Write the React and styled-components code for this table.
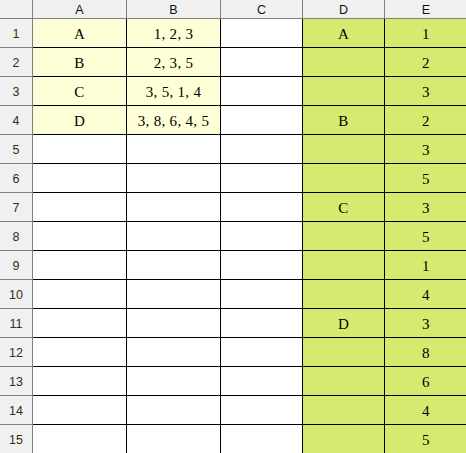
import React from "react";
import styled, { createGlobalStyle } from "styled-components";

const Global = createGlobalStyle`
  html, body { margin: 0; padding: 0; background: #ffffff; overflow: hidden; }
  body { width: 466px; height: 453px; }
`;

const Sheet = styled.div`
  display: grid;
  grid-template-columns: 33px 94px 94px 82px 82px 82px;
  grid-template-rows: 19px repeat(15, 29px);
  width: 466px;
  height: 453px;
  overflow: hidden;
`;

const HeadBase = styled.div`
  box-sizing: border-box;
  background: #f0f0f0;
  border-right: 1px solid #7f7f7f;
  border-bottom: 1px solid #7f7f7f;
  display: flex;
  align-items: center;
  justify-content: center;
  font-family: "Liberation Sans", Arial, sans-serif;
  font-size: 12.5px;
`;

const Corner = styled(HeadBase)``;

const ColHeader = styled(HeadBase)`
  color: #111111;
  padding-top: 1px;
  ${(p) => p.$last && "border-right: none;"}
`;

const RowHeader = styled(HeadBase)`
  color: #3c2a12;
  padding-top: 1px;
`;

const fills = {
  yellow: "#ffffd7",
  green: "#d5ea6e",
  none: "#ffffff",
};

const Cell = styled.div`
  box-sizing: border-box;
  background: ${(p) => fills[p.$fill]};
  border-right: ${(p) => (p.$last ? "none" : "1px solid #000000")};
  border-bottom: 1px solid #000000;
  display: flex;
  align-items: center;
  justify-content: center;
  font-family: "Liberation Serif", "Times New Roman", serif;
  font-size: 15px;
  letter-spacing: 0.3px;
  color: #000000;
  padding-top: 2px;
  white-space: pre;
`;

const cols = ["A", "B", "C", "D", "E"];

const dataA = ["A", "B", "C", "D"];
const dataB = ["1, 2, 3", "2, 3, 5", "3, 5, 1, 4", "3, 8, 6, 4, 5"];
const dataD = { 1: "A", 4: "B", 7: "C", 11: "D" };
const dataE = [1, 2, 3, 2, 3, 5, 3, 5, 1, 4, 3, 8, 6, 4, 5];

export default function App() {
  const rows = Array.from({ length: 15 }, (_, i) => i + 1);
  return (
    <>
      <Global />
      <Sheet>
        <Corner />
        {cols.map((c, i) => (
          <ColHeader key={c} $last={i === cols.length - 1}>
            {c}
          </ColHeader>
        ))}
        {rows.map((r) => (
          <React.Fragment key={r}>
            <RowHeader>{r}</RowHeader>
            <Cell $fill={r <= 4 ? "yellow" : "none"}>{r <= 4 ? dataA[r - 1] : ""}</Cell>
            <Cell $fill={r <= 4 ? "yellow" : "none"}>{r <= 4 ? dataB[r - 1] : ""}</Cell>
            <Cell $fill="none" />
            <Cell $fill="green">{dataD[r] || ""}</Cell>
            <Cell $fill="green" $last>
              {dataE[r - 1]}
            </Cell>
          </React.Fragment>
        ))}
      </Sheet>
    </>
  );
}
